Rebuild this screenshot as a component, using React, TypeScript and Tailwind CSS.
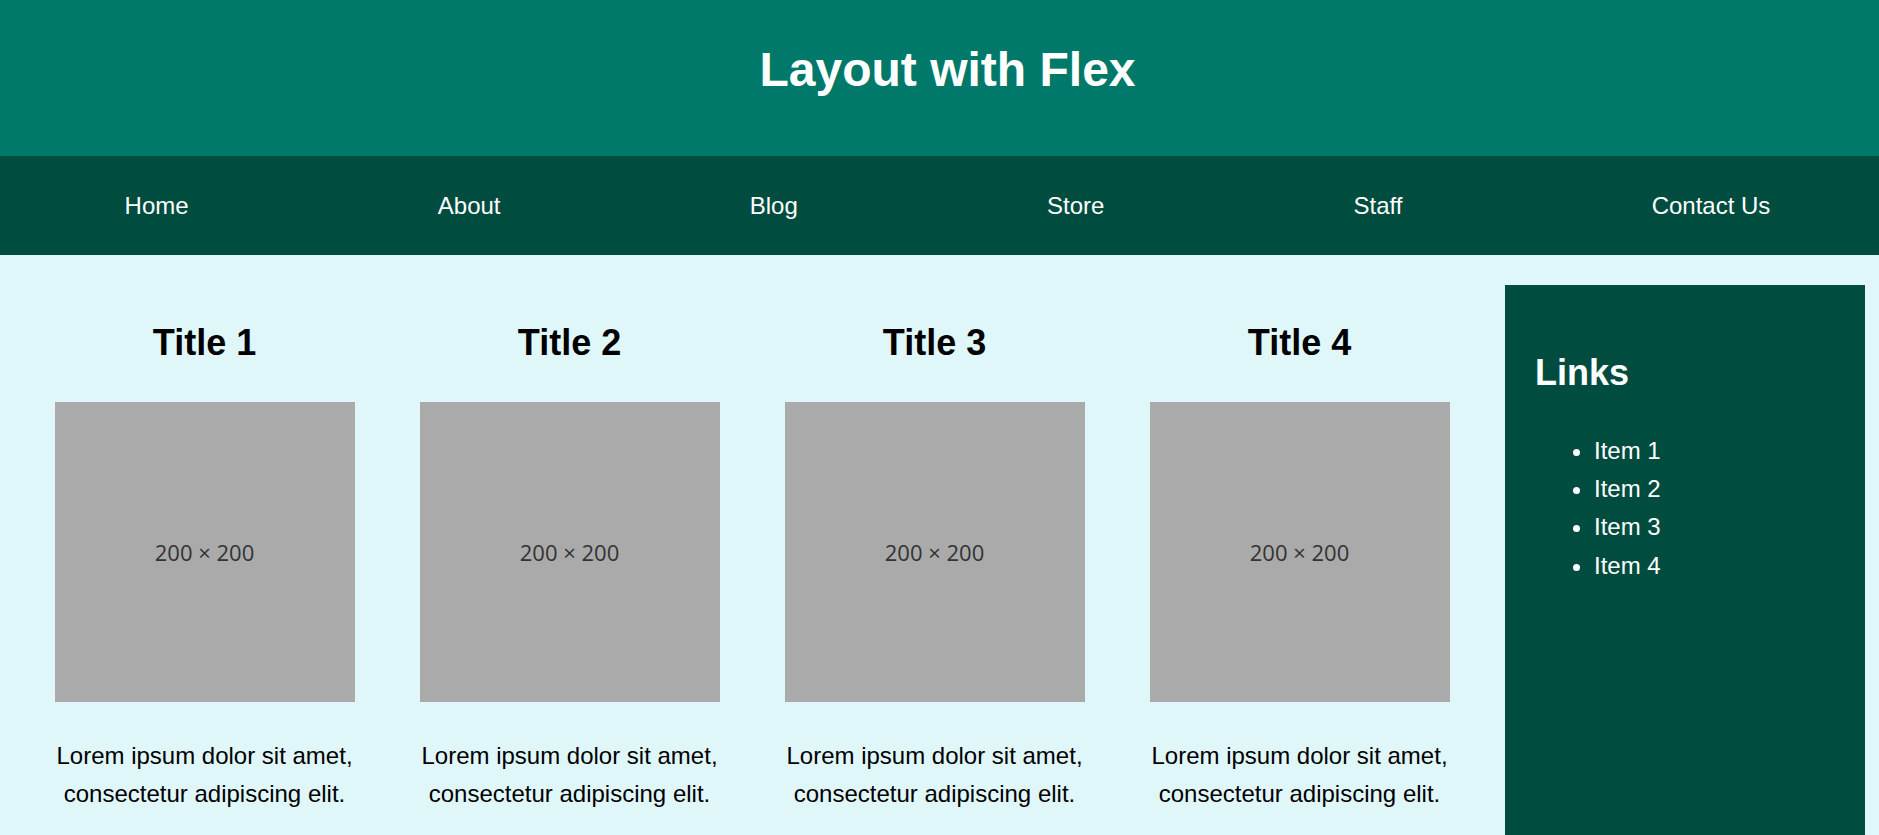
const navItems = ['Home', 'About', 'Blog', 'Store', 'Staff', 'Contact Us'];
const cards = ['Title 1', 'Title 2', 'Title 3', 'Title 4'];
const links = ['Item 1', 'Item 2', 'Item 3', 'Item 4'];

function Placeholder() {
  return (
    <div className="mx-auto flex h-[300px] w-[300px] items-center justify-center bg-[#aaaaaa]">
      <span className="pt-[2px] font-['Open_Sans',sans-serif] text-[22px] text-[#333333]">200 × 200</span>
    </div>
  );
}

export default function App() {
  return (
    <div className="w-full overflow-hidden bg-[#e0f7fa] font-['Liberation_Sans',Arial,sans-serif]">
      <div className="w-[1895px]">
        {/* Header */}
        <header className="h-[156px] bg-[#00796b] pt-[32px] text-center">
          <h1 className="text-[48px] font-bold leading-[1.6] text-white">Layout with Flex</h1>
        </header>

        {/* Nav */}
        <nav className="flex h-[99px] items-center justify-around bg-[#004d40] text-[24px] leading-[normal] text-white">
          {navItems.map(item => (
            <a key={item} href="#" className="text-white">{item}</a>
          ))}
        </nav>

        {/* Main */}
        <main className="flex pl-[22px] pt-[30px]">
          <section className="flex">
            {cards.map(title => (
              <article key={title} className="w-[365px] text-center">
                <h2 className="mb-[30px] mt-[29px] text-[36px] font-bold leading-[1.6] text-black">{title}</h2>
                <Placeholder />
                <p className="mx-auto mt-[35px] w-[300px] pb-[30px] text-[24px] leading-[1.6] text-black">
                  Lorem ipsum dolor sit amet, consectetur adipiscing elit.
                </p>
              </article>
            ))}
          </section>

          <aside className="ml-[23px] w-[360px] bg-[#004d40] px-[30px] pb-[30px] pt-[30px] text-white">
            <h2 className="mb-[30px] mt-[29px] text-[36px] font-bold leading-[1.6]">Links</h2>
            <ul className="list-disc pl-[59px] text-[24px] leading-[1.6]">
              {links.map(l => (
                <li key={l}>{l}</li>
              ))}
            </ul>
          </aside>
        </main>
      </div>
    </div>
  );
}
